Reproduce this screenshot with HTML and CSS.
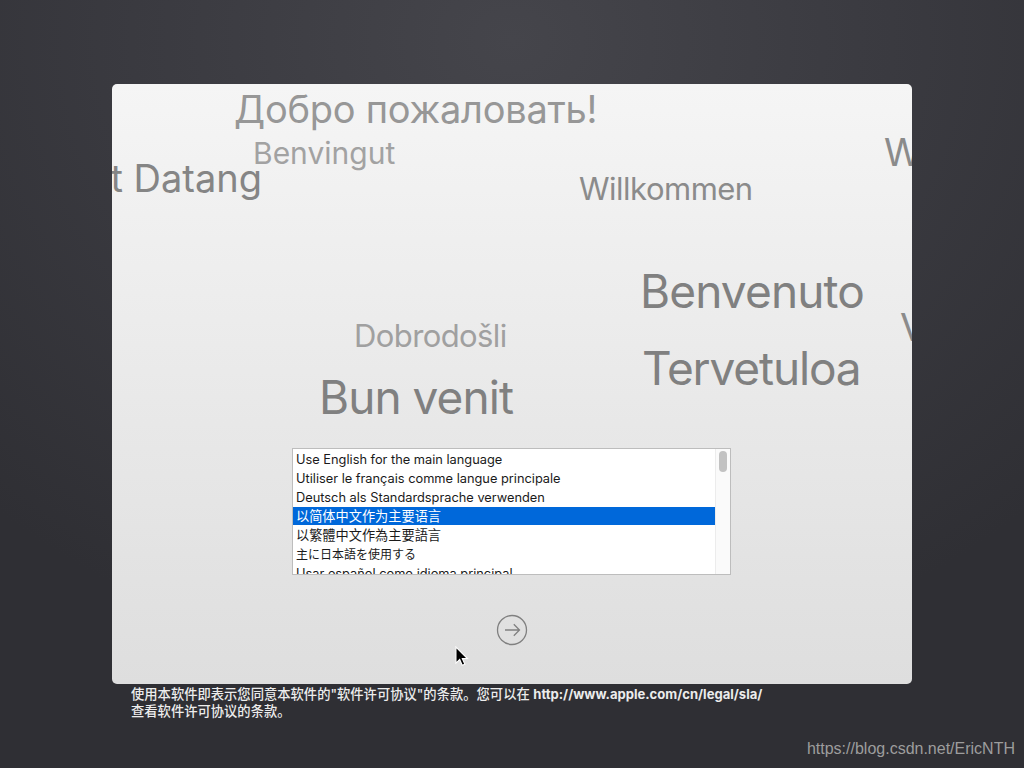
FILE: index.html
```html
<!DOCTYPE html>
<html lang="zh">
<head>
<meta charset="utf-8">
<title>Welcome</title>
<link rel="stylesheet" href="styles.css">
</head>
<body>
<main class="screen">
  <section class="window">
    <div class="cloud">
      <span class="word w-ru">Добро пожаловать!</span>
      <span class="word w-ca">Benvingut</span>
      <span class="word w-ms">Selamat Datang</span>
      <span class="word w-de">Willkommen</span>
      <span class="word w-edge1">Welcome</span>
      <span class="word w-it">Benvenuto</span>
      <span class="word w-edge2">Velkommen</span>
      <span class="word w-hr">Dobrodošli</span>
      <span class="word w-fi">Tervetuloa</span>
      <span class="word w-ro">Bun venit</span>
    </div>
    <div class="listbox">
      <ul class="options">
        <li>Use English for the main language</li>
        <li>Utiliser le français comme langue principale</li>
        <li>Deutsch als Standardsprache verwenden</li>
        <li class="selected">以简体中文作为主要语言</li>
        <li class="tc">以繁體中文作為主要語言</li>
        <li class="jp">主に日本語を使用する</li>
        <li>Usar español como idioma principal</li>
      </ul>
      <div class="scrollbar"><div class="thumb"></div></div>
    </div>
    <div class="next">
      <svg class="next-icon" width="32" height="32" viewBox="0 0 32 32" fill="none" stroke="#808080">
        <circle cx="16" cy="16" r="14.5" stroke-width="1.3"/>
        <path d="M9 16H23.5M17.8 10.2l5.7 5.8-5.7 5.8" stroke-width="1.3"/>
      </svg>
    </div>
    <svg class="cursor" width="16" height="22" viewBox="0 0 14 20">
      <path d="M1.5 1v14.5l3.4-3.2 2.3 5.2 2.4-1-2.3-5.1h4.6z" fill="#000" stroke="#fff" stroke-width="1"/>
    </svg>
  </section>
  <p class="legal">使用本软件即表示您同意本软件的"软件许可协议"的条款。您可以在 <span class="url">http://www.apple.com/cn/legal/sla/</span><br>查看软件许可协议的条款。</p>
  <div class="mark">https://blog.csdn.net/EricNTH</div>
</main>
</body>
</html>
```
FILE: styles.css
```css
* { box-sizing: border-box; }
html, body { margin: 0; height: 100%; }
body {
  background: #2f2f35;
  font-family: "Inter", "Noto Sans CJK SC", sans-serif;
  overflow: hidden;
}
.screen {
  position: relative;
  width: 1024px;
  height: 768px;
  padding: 84px 112px 0;
  background: radial-gradient(ellipse 760px 640px at 512px 40px, #45454b 0%, #3a3a40 50%, #2f2f34 100%);
}
.window {
  position: relative;
  width: 800px;
  height: 600px;
  border-radius: 5px;
  overflow: hidden;
  background: linear-gradient(#f5f5f5, #dedede);
}
.cloud { position: absolute; inset: 0; opacity: 0.999; }
.word { position: absolute; white-space: nowrap; line-height: 1; }
.w-ru { left: 122px; top: 6px; font-size: 38px; letter-spacing: -0.25px; color: #979797; }
.w-ca { left: 141px; top: 54px; font-size: 30px; color: #a2a2a2; }
.w-ms { right: 650px; top: 75px; font-size: 38px; color: #858585; }
.w-de { left: 467px; top: 89px; font-size: 31px; letter-spacing: -0.5px; color: #8b8b8b; }
.w-edge1 { left: 772px; top: 49px; font-size: 38px; color: #8b8b8b; }
.w-it { left: 528px; top: 184px; font-size: 46px; letter-spacing: -0.85px; color: #808080; }
.w-edge2 { left: 788px; top: 224px; font-size: 38px; color: #8b8b8b; }
.w-hr { left: 242px; top: 236px; font-size: 31px; letter-spacing: -0.6px; color: #a0a0a0; }
.w-fi { left: 530px; top: 261px; font-size: 46px; letter-spacing: -1.15px; color: #808080; }
.w-ro { left: 207px; top: 290px; font-size: 46px; letter-spacing: -0.95px; color: #808080; }
.listbox {
  position: absolute;
  left: 180px;
  top: 364px;
  width: 439px;
  height: 127px;
  display: flex;
  border: 1px solid #bdbdbd;
  background: #fff;
  overflow: hidden;
}
.options {
  flex: 1;
  margin: 0;
  padding: 1px 0 0;
  list-style: none;
  font-size: 12.8px;
  color: #1a1a1a;
  opacity: 0.999;
}
.options li {
  height: 19px;
  line-height: 20px;
  padding-left: 3px;
  white-space: nowrap;
}
.options .selected { height: 18px; margin-bottom: 1px; line-height: 18px; font-size: 13.2px; background: #0068da; color: #fff; }
.options .tc { line-height: 18px; font-family: "Inter", "Noto Sans CJK TC", sans-serif; font-size: 13.2px; }
.options .jp { font-family: "Inter", "Noto Sans CJK JP", sans-serif; font-size: 12px; }
.scrollbar {
  width: 15px;
  padding: 2px 3px;
  background: #fafafa;
  border-left: 1px solid #ececec;
}
.thumb { width: 8px; height: 21px; border-radius: 4px; background: #c2c2c2; }
.next { position: absolute; left: 384px; top: 530px; width: 32px; height: 32px; }
.next-icon { display: block; }
.cursor { position: absolute; left: 342px; top: 562px; }
.legal {
  margin: 2px 0 0 19px;
  font-size: 13.3px;
  font-weight: 500;
  line-height: 17px;
  color: #ececec;
  opacity: 0.999;
}
.url { font-size: 13.05px; font-weight: 700; line-height: 1; }
.mark {
  position: absolute;
  right: 9px;
  bottom: 10px;
  font-family: "Liberation Sans", sans-serif;
  font-size: 16px;
  color: #9d9d9d;
  opacity: 0.999;
}
```
